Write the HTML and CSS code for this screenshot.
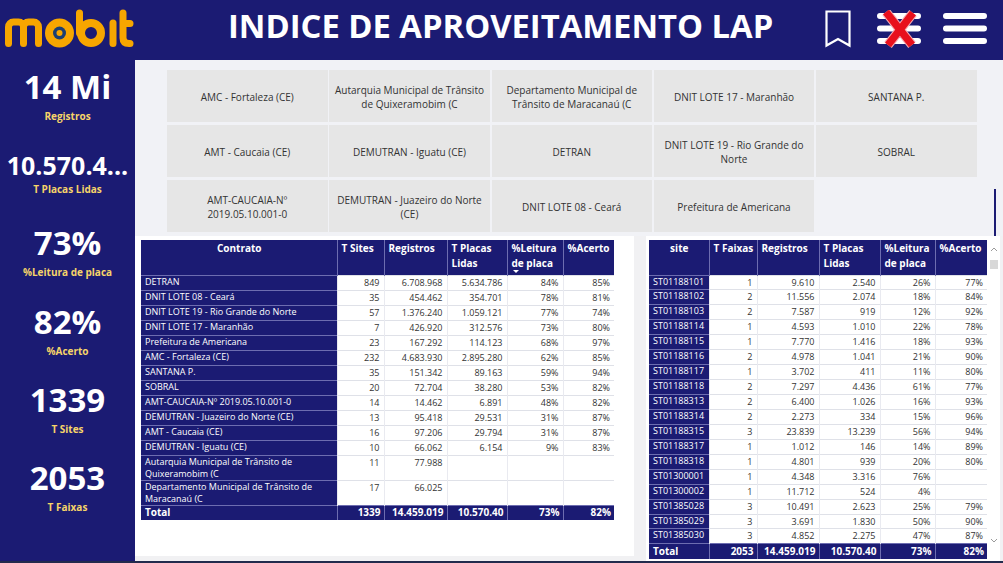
FILE: index.html
```html
<!DOCTYPE html>
<html lang="pt">
<head>
<meta charset="utf-8">
<title>Indice de Aproveitamento LAP</title>
<link rel="stylesheet" href="styles.css">
</head>
<body>
<div class="app">
  <header class="topbar">
    <svg class="logo" viewBox="0 0 134 60" aria-label="mobit">
      <g fill="none" stroke="#f7a600" stroke-width="7" stroke-linecap="round">
        <path d="M8.500 43.500V27a5 5 0 0 1 5-5h5a5 5 0 0 1 5 5V43.500M23.500 27a5 5 0 0 1 5-5h5a5 5 0 0 1 5 5V43.500"/>
        <path d="M79.500 13V33"/>
        <circle cx="91" cy="33" r="10" stroke-width="8"/>
        <path d="M113 23V43.500"/>
        <path d="M123 13V38q0 5.500 6 5.500h1M123 23.500H130"/>
      </g>
      <circle cx="59.500" cy="33" r="14.500" fill="#f7a600"/>
      <circle cx="59.500" cy="33" r="6.500" fill="#1b3f73"/>
      <circle cx="59.500" cy="33" r="3" fill="#f7a600"/>
    </svg>
    <h1 class="title">INDICE DE APROVEITAMENTO LAP</h1>
    <div class="tools">
      <svg class="icon-bookmark" viewBox="0 0 26 38"><path d="M1.500 1.500H24.500V35.500L13 29L1.500 35.500Z" fill="none" stroke="#fff" stroke-width="2.200"/></svg>
      <svg class="icon-menu icon-off" viewBox="0 0 46 38">
        <path d="M4 6H42M4 18.500H42M4 31H42" stroke="#fff" stroke-width="6" stroke-linecap="round"/>
        <path d="M10 2L36 35M37 3L12 35" stroke="#f6a9b0" stroke-width="9.500"/>
        <path d="M10 2L36 35M37 3L12 35" stroke="#e8101c" stroke-width="7.500"/>
      </svg>
      <svg class="icon-menu" viewBox="0 0 46 38"><path d="M4 6H42M4 18.500H42M4 31H42" stroke="#fff" stroke-width="6" stroke-linecap="round"/></svg>
    </div>
  </header>
  <div class="body">
    <aside class="sidebar">
      <div class="kpi"><div class="kpi-value">14 Mi</div><div class="kpi-label">Registros</div></div>
      <div class="kpi kpi-small"><div class="kpi-value">10.570.4...</div><div class="kpi-label">T Placas Lidas</div></div>
      <div class="kpi"><div class="kpi-value">73%</div><div class="kpi-label">%Leitura de placa</div></div>
      <div class="kpi"><div class="kpi-value">82%</div><div class="kpi-label">%Acerto</div></div>
      <div class="kpi"><div class="kpi-value">1339</div><div class="kpi-label">T Sites</div></div>
      <div class="kpi"><div class="kpi-value">2053</div><div class="kpi-label">T Faixas</div></div>
    </aside>
    <main class="main">
      <section class="slicer">
        <div class="tiles">
          <div class="tile">AMC - Fortaleza (CE)</div>
          <div class="tile">Autarquia Municipal de Trânsito de Quixeramobim (C</div>
          <div class="tile">Departamento Municipal de Trânsito de Maracanaú (C</div>
          <div class="tile">DNIT LOTE 17 - Maranhão</div>
          <div class="tile">SANTANA P.</div>
          <div class="tile">AMT - Caucaia (CE)</div>
          <div class="tile">DEMUTRAN - Iguatu (CE)</div>
          <div class="tile">DETRAN</div>
          <div class="tile">DNIT LOTE 19 - Rio Grande do Norte</div>
          <div class="tile">SOBRAL</div>
          <div class="tile">AMT-CAUCAIA-Nº 2019.05.10.001-0</div>
          <div class="tile">DEMUTRAN - Juazeiro do Norte (CE)</div>
          <div class="tile">DNIT LOTE 08 - Ceará</div>
          <div class="tile">Prefeitura de Americana</div>
        </div>
        <div class="slicer-thumb"></div>
      </section>
      <div class="tables">
        <section class="panel panel-left">
          <table class="grid grid-left">
            <colgroup><col class="c196"><col class="c47"><col class="c63"><col class="c60"><col class="c56"><col class="c51"></colgroup>
            <thead><tr><th class="center">Contrato</th><th>T Sites</th><th>Registros</th><th>T Placas Lidas</th><th>%Leitura de placa<span class="sort"></span></th><th>%Acerto</th></tr></thead>
            <tbody>
              <tr><th>DETRAN</th><td>849</td><td>6.708.968</td><td>5.634.786</td><td>84%</td><td>85%</td></tr>
              <tr><th>DNIT LOTE 08 - Ceará</th><td>35</td><td>454.462</td><td>354.701</td><td>78%</td><td>81%</td></tr>
              <tr><th>DNIT LOTE 19 - Rio Grande do Norte</th><td>57</td><td>1.376.240</td><td>1.059.121</td><td>77%</td><td>74%</td></tr>
              <tr><th>DNIT LOTE 17 - Maranhão</th><td>7</td><td>426.920</td><td>312.576</td><td>73%</td><td>80%</td></tr>
              <tr><th>Prefeitura de Americana</th><td>23</td><td>167.292</td><td>114.123</td><td>68%</td><td>97%</td></tr>
              <tr><th>AMC - Fortaleza (CE)</th><td>232</td><td>4.683.930</td><td>2.895.280</td><td>62%</td><td>85%</td></tr>
              <tr><th>SANTANA P.</th><td>35</td><td>151.342</td><td>89.163</td><td>59%</td><td>94%</td></tr>
              <tr><th>SOBRAL</th><td>20</td><td>72.704</td><td>38.280</td><td>53%</td><td>82%</td></tr>
              <tr><th>AMT-CAUCAIA-Nº 2019.05.10.001-0</th><td>14</td><td>14.462</td><td>6.891</td><td>48%</td><td>82%</td></tr>
              <tr><th>DEMUTRAN - Juazeiro do Norte (CE)</th><td>13</td><td>95.418</td><td>29.531</td><td>31%</td><td>87%</td></tr>
              <tr><th>AMT - Caucaia (CE)</th><td>16</td><td>97.206</td><td>29.794</td><td>31%</td><td>87%</td></tr>
              <tr><th>DEMUTRAN - Iguatu (CE)</th><td>10</td><td>66.062</td><td>6.154</td><td>9%</td><td>83%</td></tr>
              <tr class="tall"><th>Autarquia Municipal de Trânsito de Quixeramobim (C</th><td>11</td><td>77.988</td><td></td><td></td><td></td></tr>
              <tr class="tall"><th>Departamento Municipal de Trânsito de Maracanaú (C</th><td>17</td><td>66.025</td><td></td><td></td><td></td></tr>
            </tbody>
            <tfoot><tr><th>Total</th><th>1339</th><th>14.459.019</th><th>10.570.40</th><th>73%</th><th>82%</th></tr></tfoot>
          </table>
        </section>
        <section class="panel panel-right">
          <table class="grid grid-right">
            <colgroup><col class="c60"><col class="c48"><col class="c62"><col class="c61"><col class="c55"><col class="c52"></colgroup>
            <thead><tr><th class="center">site</th><th>T Faixas</th><th>Registros</th><th>T Placas Lidas</th><th>%Leitura de placa</th><th>%Acerto</th></tr></thead>
            <tbody>
              <tr><th>ST01188101</th><td>1</td><td>9.610</td><td>2.540</td><td>26%</td><td>77%</td></tr>
              <tr><th>ST01188102</th><td>2</td><td>11.556</td><td>2.074</td><td>18%</td><td>84%</td></tr>
              <tr><th>ST01188103</th><td>2</td><td>7.587</td><td>919</td><td>12%</td><td>92%</td></tr>
              <tr><th>ST01188114</th><td>1</td><td>4.593</td><td>1.010</td><td>22%</td><td>78%</td></tr>
              <tr><th>ST01188115</th><td>1</td><td>7.770</td><td>1.416</td><td>18%</td><td>93%</td></tr>
              <tr><th>ST01188116</th><td>2</td><td>4.978</td><td>1.041</td><td>21%</td><td>90%</td></tr>
              <tr><th>ST01188117</th><td>1</td><td>3.702</td><td>411</td><td>11%</td><td>80%</td></tr>
              <tr><th>ST01188118</th><td>2</td><td>7.297</td><td>4.436</td><td>61%</td><td>77%</td></tr>
              <tr><th>ST01188313</th><td>2</td><td>6.400</td><td>1.026</td><td>16%</td><td>93%</td></tr>
              <tr><th>ST01188314</th><td>2</td><td>2.273</td><td>334</td><td>15%</td><td>96%</td></tr>
              <tr><th>ST01188315</th><td>3</td><td>23.839</td><td>13.239</td><td>56%</td><td>94%</td></tr>
              <tr><th>ST01188317</th><td>1</td><td>1.012</td><td>146</td><td>14%</td><td>89%</td></tr>
              <tr><th>ST01188318</th><td>1</td><td>4.801</td><td>939</td><td>20%</td><td>80%</td></tr>
              <tr><th>ST01300001</th><td>1</td><td>4.348</td><td>3.316</td><td>76%</td><td></td></tr>
              <tr><th>ST01300002</th><td>1</td><td>11.712</td><td>524</td><td>4%</td><td></td></tr>
              <tr><th>ST01385028</th><td>3</td><td>10.491</td><td>2.623</td><td>25%</td><td>79%</td></tr>
              <tr><th>ST01385029</th><td>3</td><td>3.691</td><td>1.830</td><td>50%</td><td>90%</td></tr>
              <tr><th>ST01385030</th><td>3</td><td>4.852</td><td>2.275</td><td>47%</td><td>87%</td></tr>
            </tbody>
            <tfoot><tr><th>Total</th><th>2053</th><th>14.459.019</th><th>10.570.40</th><th>73%</th><th>82%</th></tr></tfoot>
          </table>
          <div class="scrollbar">
            <svg class="chev" viewBox="0 0 8 5"><path d="M1 4L4 1L7 4" fill="none" stroke="#9a9a9a"/></svg>
            <div class="scroll-thumb"></div>
            <svg class="chev chev-down" viewBox="0 0 8 5"><path d="M1 1L4 4L7 1" fill="none" stroke="#9a9a9a"/></svg>
          </div>
        </section>
      </div>
    </main>
  </div>
  <div class="bottom-strip"></div>
</div>
</body>
</html>
```
FILE: styles.css
```css
* { box-sizing: border-box; }
html, body { margin: 0; padding: 0; height: 100%; overflow: hidden; }
body { font-family: "Open Sans", "Noto Sans", sans-serif; background: #1b1b73; }

.app { width: 1003px; height: 563px; display: flex; flex-direction: column; position: relative; }

.topbar { height: 60px; flex: none; display: flex; align-items: flex-start; background: #1b1b73; }
.logo { width: 134px; height: 60px; flex: none; }
.title { margin: 4px 0 0 94px; color: #fff; font-size: 32.750px; line-height: 44px; font-weight: 700; white-space: nowrap; }
.tools { display: flex; align-items: flex-start; margin-left: auto; margin-right: 15px; }
.icon-bookmark { width: 26px; height: 38px; margin-top: 10px; }
.icon-menu { width: 46px; height: 38px; margin-top: 10px; }
.icon-off { margin-left: 25px; }
.icon-menu:last-child { margin-left: 20px; }

.body { flex: 1; display: flex; min-height: 0; }
.sidebar { width: 135px; flex: none; display: grid; grid-auto-rows: 78.200px; align-content: start; background: #1b1b73; }
.kpi { text-align: center; color: #fff; padding-top: 5px; }
.kpi-value { font-size: 33px; line-height: 44px; font-weight: 700; white-space: nowrap; }
.kpi-label { font-size: 10px; line-height: 14px; font-weight: 700; color: #f6d469; }
.kpi-small { padding-top: 10px; }
.kpi-small .kpi-value { font-size: 25px; line-height: 34px; }

.main { flex: 1; min-width: 0; display: flex; flex-direction: column; background: #f1f1f3; }
.slicer { height: 176px; flex: none; position: relative; padding: 10px 0 0 32px; background: #f1f2f6; }
.tiles { display: grid; grid-template-columns: repeat(5, 160.500px); grid-auto-rows: 52px; column-gap: 1.750px; row-gap: 3px; }
.tile { display: flex; align-items: center; justify-content: center; text-align: center; padding: 1px 3px 0; background: #e6e6e6; color: #333; font-size: 10px; line-height: 14px; }
.slicer-thumb { position: absolute; left: 859px; top: 129px; width: 2px; height: 47px; background: #1b1b73; }

.tables { flex: 1; min-height: 0; display: flex; justify-content: space-between; padding-bottom: 2px; }
.panel { background: #fff; position: relative; padding-top: 4px; }
.panel-left { width: 499px; height: 320px; padding-left: 6px; }
.panel-right { width: 354px; height: 325px; padding-left: 3px; display: flex; align-items: flex-start; margin-right: 3px; }

.grid { table-layout: fixed; border-collapse: collapse; font-size: 9px; line-height: 12px; color: #333; }
.grid-left { width: 473px; }
.grid-right { width: 338px; }
.c196 { width: 196px; } .c47 { width: 47px; } .c63 { width: 63px; } .c60 { width: 60px; }
.c56 { width: 56px; } .c51 { width: 51px; } .c48 { width: 48px; } .c62 { width: 62px; }
.c61 { width: 61px; } .c55 { width: 55px; } .c52 { width: 52px; }

.grid thead th { height: 35px; padding: 1px 3px 0 4px; vertical-align: top; text-align: left; background: #1b1b73; color: #fff; font-size: 10px; font-weight: 700; line-height: 15px; border-left: 1px solid #6d6db0; position: relative; }
.grid thead th:first-child { border-left: 0; }
.grid thead th.center { text-align: center; }
.sort { position: absolute; left: 5px; bottom: 2px; width: 0; height: 0; border-left: 3.500px solid transparent; border-right: 3.500px solid transparent; border-top: 3.500px solid #fff; }

.grid tbody tr { height: 15px; }
.grid tbody tr.tall { height: 25px; }
.grid-right tbody tr { height: 14.950px; }
.grid tbody th { padding: 0 4px; background: #1b1b73; color: #fff; font-weight: 400; text-align: left; vertical-align: top; border-top: 1px solid #6d6db0; line-height: 12px; white-space: normal; }
.grid tbody td { padding: 0 4px; text-align: right; vertical-align: top; border-top: 1px solid #dfe1e8; border-left: 1px solid #e9eaf0; line-height: 13px; background: #fff; }
.grid tfoot th { height: 15px; padding: 0 3px; background: #1b1b73; color: #fff; font-size: 10px; font-weight: 700; text-align: right; border-left: 1px solid #6d6db0; border-top: 1px solid #6d6db0; line-height: 13px; vertical-align: middle; }
.grid tfoot th:first-child { text-align: left; border-left: 0; padding-left: 4px; }

.scrollbar { width: 13px; height: 320px; flex: none; display: flex; flex-direction: column; align-items: center; padding-top: 7px; }
.chev { width: 8px; height: 5px; flex: none; }
.chev-down { margin-top: auto; margin-bottom: 17px; }
.scroll-thumb { width: 8px; height: 9px; margin-top: 8px; background: #d8d8d8; }

.bottom-strip { position: absolute; left: 0; right: 0; bottom: 0; height: 2px; background: #222b4d; }
```
